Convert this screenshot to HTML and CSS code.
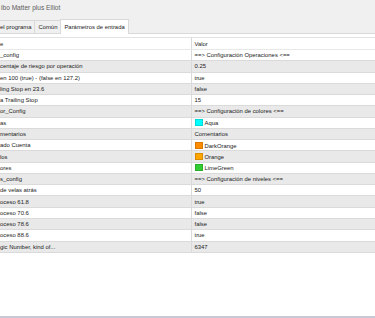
FILE: index.html
```html
<!DOCTYPE html>
<html lang="es">
<head>
  <meta charset="UTF-8">
  <meta name="viewport" content="width=device-width, initial-scale=1.0">
  <title>Parámetros de entrada</title>
  <link rel="stylesheet" href="styles.css">
</head>
<body>

  <!-- Title bar -->
  <div class="titlebar">ibo Matter plus Elliot</div>

  <!-- Tabs -->
  <div class="tabs">
    <div class="tab">el programa</div>
    <div class="tab">Común</div>
    <div class="tab active">Parámetros de entrada</div>
  </div>

  <!-- Inputs grid -->
  <div class="panel">
    <table class="params">
      <thead>
        <tr><th class="name">e</th><th class="value">Valor</th></tr>
      </thead>
      <tbody>
        <tr><td class="name">_config</td><td class="value">==&gt; Configuración Operaciones &lt;==</td></tr>
        <tr><td class="name">centaje de riesgo por operación</td><td class="value">0.25</td></tr>
        <tr><td class="name">en 100 (true) - (false en 127.2)</td><td class="value">true</td></tr>
        <tr><td class="name">ling Stop en 23.6</td><td class="value">false</td></tr>
        <tr><td class="name">a Trailing Stop</td><td class="value">15</td></tr>
        <tr><td class="name">or_Config</td><td class="value">==&gt; Configuración de colores &lt;==</td></tr>
        <tr><td class="name">as</td><td class="value"><span class="swatch aqua"></span>Aqua</td></tr>
        <tr><td class="name">mentarios</td><td class="value">Comentarios</td></tr>
        <tr><td class="name">ado Cuenta</td><td class="value"><span class="swatch dark-orange"></span>DarkOrange</td></tr>
        <tr><td class="name">los</td><td class="value"><span class="swatch orange"></span>Orange</td></tr>
        <tr><td class="name">ores</td><td class="value"><span class="swatch lime"></span>LimeGreen</td></tr>
        <tr><td class="name">s_config</td><td class="value">==&gt; Configuración de niveles &lt;==</td></tr>
        <tr><td class="name">de velas atrás</td><td class="value">50</td></tr>
        <tr><td class="name">oceso 61.8</td><td class="value">true</td></tr>
        <tr><td class="name">oceso 70.6</td><td class="value">false</td></tr>
        <tr><td class="name">oceso 78.6</td><td class="value">false</td></tr>
        <tr><td class="name">oceso 88.6</td><td class="value">true</td></tr>
        <tr><td class="name">gic Number, kind of...</td><td class="value">6347</td></tr>
      </tbody>
    </table>
  </div>

</body>
</html>
```

FILE: styles.css
```css
/* Reset & base */
* { margin: 0; padding: 0; box-sizing: border-box; }
html, body { height: 100%; }
body {
  font-family: "Liberation Sans", Arial, sans-serif;
  font-size: 5.9px;
  color: #1a1a1a;
  background: #f0f0f0;
  overflow: hidden;
  display: flex;
  flex-direction: column;
}

/* Title bar */
.titlebar {
  height: 15px;
  line-height: 15px;
  padding-left: 1px;
  color: #606060;
  font-size: 6.6px;
}

/* Tabs */
.tabs {
  height: 18px;
  display: flex;
  align-items: flex-end;
}
.tab {
  height: 13px;
  line-height: 12px;
  padding: 0 3px;
  border: 1px solid #d9d9d9;
  border-bottom: none;
  margin-right: -1px;
  background: #f0f0f0;
}
.tab:first-child { padding-left: 0; border-left: none; }
.tab.active {
  height: 15px;
  line-height: 14px;
  background: #fff;
  position: relative;
  z-index: 1;
  margin-bottom: -1px;
}

/* Panel */
.panel {
  flex: 1;
  background: #fff;
  border-top: 1px solid #d9d9d9;
  border-bottom: 2px solid #c9c9d6;
  padding-top: 3px;
}

/* Grid */
.params {
  width: 100%;
  border-collapse: collapse;
  table-layout: fixed;
  border-top: 1px solid #e3e3e3;
}
.params th,
.params td {
  text-align: left;
  font-weight: normal;
  white-space: nowrap;
  overflow: hidden;
  border-bottom: 1px solid #dadada;
}
.params th { height: 12px; border-bottom-color: #e8e8e8; }
.params td { height: 11.28px; }
.params .name { width: 191px; padding-left: 0; }
.params .value { padding-left: 3px; border-left: 1px solid #dadada; }
.params tbody tr:nth-child(even) td { background: #e9e9e9; }

/* Colour swatches */
.swatch {
  display: inline-block;
  width: 8px;
  height: 7px;
  margin-right: 2px;
  vertical-align: -1px;
  border: 1px solid rgba(0, 0, 0, 0.15);
}
.swatch.aqua { background: #00ffff; }
.swatch.dark-orange { background: #ff8c00; }
.swatch.orange { background: #ffa500; }
.swatch.lime { background: #32cd32; }
```
